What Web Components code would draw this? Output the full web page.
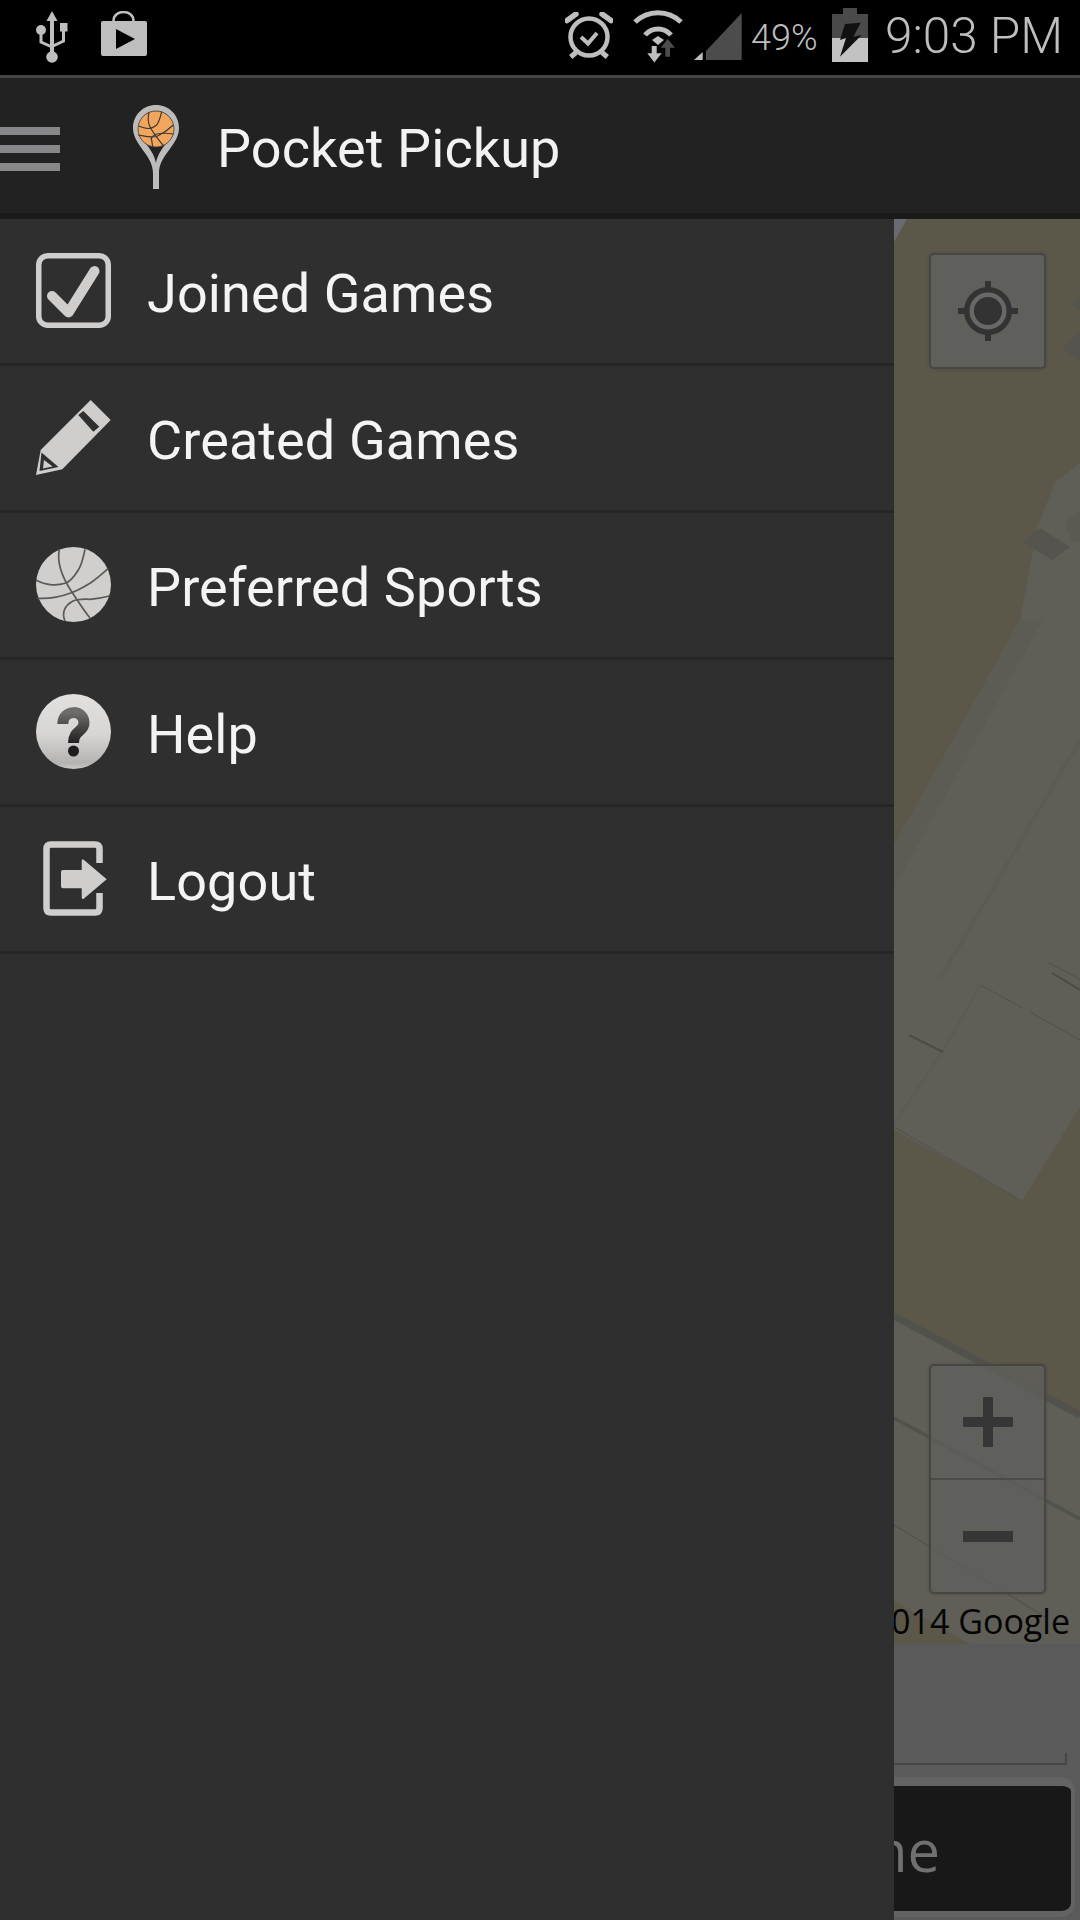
<!DOCTYPE html>
<html><head><meta charset="utf-8"><style>
html,body{margin:0;padding:0;background:#000}
body{width:1080px;height:1920px;overflow:hidden;font-family:Roboto,"Liberation Sans",sans-serif}
</style></head><body>
<app-shell>
  <status-bar slot="status"></status-bar>
  <action-bar slot="action" title-text="Pocket Pickup"></action-bar>
  <map-pane slot="map"></map-pane>
  <nav-drawer slot="drawer">
    <drawer-item icon="check">Joined Games</drawer-item>
    <drawer-item icon="pencil">Created Games</drawer-item>
    <drawer-item icon="ball">Preferred Sports</drawer-item>
    <drawer-item icon="help">Help</drawer-item>
    <drawer-item icon="logout">Logout</drawer-item>
  </nav-drawer>
</app-shell>
<script>
const def=(name,html)=>customElements.define(name,class extends HTMLElement{
  constructor(){super();this.attachShadow({mode:'open'}).innerHTML=typeof html==='function'?html(this):html;}
});
const ICONS={
check:`<svg width="76" height="76" viewBox="0 0 76 76"><rect x="2.750" y="2.750" width="69.500" height="69.500" rx="9" fill="none" stroke="#cfcecc" stroke-width="5.500"/><path d="M16 43 L32.500 59.500 L58.500 18" fill="none" stroke="#cfcecc" stroke-width="10" stroke-linecap="round" stroke-linejoin="round"/></svg>`,
pencil:`<svg width="76" height="76" viewBox="0 0 76 76"><path d="M54.700 0 L74.700 20 L26.300 69.300 L0 75 L4.700 50 Z" fill="#cfcecc"/><path d="M42.300 15 L47.300 11 L63.300 26.700 L57.300 31.700 Z" fill="#2f2f2f"/><path d="M5.500 52.500 L22.500 67 L3.500 71 Z" fill="#2f2f2f"/><path d="M8 60 L16.500 66.500 L7 68.500 Z" fill="#cfcecc"/></svg>`,
ball:`<svg width="76" height="76" viewBox="0 0 76 76"><circle cx="37.500" cy="37.500" r="37.500" fill="#d0cfcd"/><g fill="none" stroke="#5a5a5a" stroke-width="1.700"><path d="M23.300 2.300 C21 14 24 27 35.700 44.700 C42 54 48 64 54 71"/><path d="M49 2.300 C47 12 45 19 42.300 23 C38 30 34 35 29 36.300 C20 39 8 38 0 33"/><path d="M72.300 21.300 C66 27 60 32 54 36.300 C48 40 41 44 34 46.300 C24 50 12 52 1.300 51.300"/><path d="M73.300 49 C66 51 60 52 54 52.300 C46 52 40 52 35.700 54.700 C30 58 25 65 29 74"/></g></svg>`,
help:`<svg width="76" height="76" viewBox="0 0 76 76"><defs><linearGradient id="h" x1="0" y1="0" x2="0" y2="1"><stop offset="0" stop-color="#e2e1e0"/><stop offset=".55" stop-color="#d6d5d3"/><stop offset=".92" stop-color="#b4b3b1"/><stop offset="1" stop-color="#cbcac8"/></linearGradient><linearGradient id="q" x1="0" y1="0" x2="0" y2="1"><stop offset="0" stop-color="#6e6c6a"/><stop offset="1" stop-color="#222020"/></linearGradient></defs><circle cx="37.500" cy="37.500" r="37.500" fill="url(#h)"/><path d="M26.800 30 C26.800 15 48 15 48 29 C48 38 37.500 36 37.500 49" fill="none" stroke="url(#q)" stroke-width="11"/><circle cx="37.500" cy="57" r="5.500" fill="#1e1c1c"/></svg>`,
logout:`<svg width="76" height="76" viewBox="0 0 76 76"><path d="M63.500 22 V8 Q63.500 3.500 59 3.500 H15 Q10.500 3.500 10.500 8 V67 Q10.500 71.500 15 71.500 H59 Q63.500 71.500 63.500 67 V52" fill="none" stroke="#cfcecc" stroke-width="6.500"/><path d="M27 29 Q25 29 25 31 V45 Q25 47.300 27 47.300 H45.700 V56 Q45.700 59 48 57.500 L70.700 38.300 L48 19 Q45.700 17 45.700 20 V29 Z" fill="#cfcecc"/></svg>`};

def('app-shell',`<style>
:host{display:grid;grid-template-columns:894px 186px;grid-template-rows:78px 141px 1701px;width:1080px;height:1920px;background:#000}
::slotted([slot=status]){grid-column:1/3;grid-row:1}
::slotted([slot=action]){grid-column:1/3;grid-row:2}
::slotted([slot=drawer]){grid-column:1;grid-row:3}
::slotted([slot=map]){grid-column:2;grid-row:3}
</style><slot name="status"></slot><slot name="action"></slot><slot name="drawer"></slot><slot name="map"></slot>`);

def('status-bar',`<style>
:host{display:flex;align-items:flex-start;box-sizing:border-box;height:78px;background:#000;border-bottom:3px solid #444;color:#bebebe;font-family:Roboto,sans-serif}
svg{display:block;flex:none}
.pct{flex:none;width:70px;font-weight:300;font-size:36px;line-height:40px;margin:18px 0 0 9px}
.time{flex:none;font-weight:300;font-size:49.500px;line-height:58px;margin:7px 0 0 17px;white-space:nowrap}
</style>
<svg width="32" height="53" viewBox="0 0 32 53" style="margin:11px 0 0 36px"><path d="M16 0 L21.500 10 H18 V42 H14 V10 H10.500 Z" fill="#bebebe"/><circle cx="16" cy="46" r="5.800" fill="#bebebe"/><circle cx="5" cy="19" r="5" fill="#bebebe"/><rect x="24" y="12" width="7.500" height="8.500" fill="#bebebe"/><path d="M5 22 V31 L16 36 M27.500 20 V30 L16 35.500" fill="none" stroke="#bebebe" stroke-width="3"/></svg>
<svg width="46" height="45" viewBox="0 0 46 45" style="margin:11px 0 0 33px"><path d="M12.500 10 C12.500 -2 32.500 -2 32.500 10" fill="none" stroke="#bebebe" stroke-width="2.500"/><rect x="0" y="10" width="46" height="35" rx="2" fill="#bebebe"/><path d="M15 18 L34 28 L15 38 Z" fill="#000"/></svg>
<svg width="48" height="49" viewBox="0 0 48 49" style="margin:12px 0 0 418px"><circle cx="24" cy="25" r="18.500" fill="none" stroke="#bebebe" stroke-width="4.500"/><path d="M16 25 L23 31.500 L32 21" fill="none" stroke="#bebebe" stroke-width="4"/><path d="M2 8.500 L11 2 M46 8.500 L37 2" stroke="#bebebe" stroke-width="5.500" stroke-linecap="round"/><path d="M5.700 45 L11 40.500 M42.300 45 L37 40.500" stroke="#bebebe" stroke-width="5"/></svg>
<svg width="50" height="54" viewBox="0 0 50 54" style="margin:9px 0 0 20px"><g fill="none" stroke="#bebebe" stroke-width="5"><path d="M2 13 A33 33 0 0 1 48 13"/><path d="M12 26 A17 17 0 0 1 38 26"/></g><path d="M19 31 L25 27 L31 31 L25 36 Z" fill="#bebebe"/><path d="M18.700 37 H23.700 V44.300 H28.700 L21.300 53.500 L14.300 44.300 H18.700 Z" fill="#bebebe"/><path d="M34.700 30 L42 38.700 H37 V47.700 H32.300 V38.700 H27.700 Z" fill="#4c4c4c"/></svg>
<svg width="48" height="47" viewBox="0 0 48 47" style="margin:13px 0 0 11px"><path d="M0 47 L8.700 39 V47 Z" fill="#bebebe"/><path d="M12 47 V38 L47.700 0 V47 Z" fill="#4c4c4c"/></svg>
<span class="pct">49%</span>
<svg width="36" height="54" viewBox="0 0 36 54" style="margin:8px 0 0 11px"><rect x="11" y="0" width="14" height="7" fill="#4a4a4a"/><rect x="0" y="6" width="36" height="24" fill="#4a4a4a"/><rect x="0" y="30" width="36" height="24" fill="#c2c2c2"/><path d="M13 16 L28.700 14.700 L21.300 28.700 L29.700 27 L8 48.700 L14 30 L8 32 Z" fill="#111"/></svg>
<span class="time">9:03 PM</span>`);

def('action-bar',h=>`<style>
:host{display:flex;align-items:center;box-sizing:border-box;height:141px;background:#222;border-bottom:6px solid #1a1a1a;color:#f2f2f2}
svg{display:block;flex:none}
.t{font:400 54px/1 Roboto,sans-serif;margin-left:38px;padding-top:7px;letter-spacing:.1px;white-space:nowrap}
</style>
<svg width="60" height="44" viewBox="0 0 60 44" style="margin-top:7px"><g fill="#88888b"><rect width="60" height="8"/><rect y="18" width="60" height="8"/><rect y="36" width="60" height="8"/></g></svg>
<svg width="46" height="84" viewBox="0 0 46 84" style="margin:3px 0 0 73px"><path d="M23 0 C36 0 46 10 46 23 C46 40 26 50 26 68 V84 H20 V68 C20 50 0 40 0 23 C0 10 10 0 23 0 Z" fill="#bdbcba"/><path d="M23 6 C12 6 6 14 6 23 C6 35 20 42 23 58 C26 42 40 35 40 23 C40 14 34 6 23 6 Z" fill="#222"/><circle cx="23" cy="24" r="18" fill="#f2a55c" stroke="#3c3c3c" stroke-width=".8"/><g fill="none" stroke="#3e3a36" stroke-width="1.200"><path d="M16 7 C14.500 14 15 18 17 21.700 C20 28 25 34 30.300 40.500"/><path d="M28.700 6.700 C27.500 12 26 17 23.700 20 C20 23 17 24 13.700 23.300 C11 23 8 22 5.500 21"/><path d="M40.300 20 C34 26 29 29 23.700 31.500 C17 33 11 31 5.300 30"/><path d="M40.800 29 C34 28 28 28 23.700 29 C20 30.500 17 33 18.700 35 C19 38 19.500 40 19.700 41.700"/></g></svg>
<span class="t">${h.getAttribute('title-text')}</span>`);

def('nav-drawer',`<style>
:host{display:flex;flex-direction:column;background:#2f2f2f;min-height:0;position:relative;z-index:1}
</style><slot></slot>`);

def('drawer-item',h=>`<style>
:host{display:flex;align-items:center;box-sizing:border-box;height:147px;flex:none;border-bottom:3px solid #262626;color:#f4f4f4;font:400 54px/1 Roboto,sans-serif;letter-spacing:.1px;padding-left:36px;white-space:nowrap}
.i{flex:none;width:76px;height:76px;margin-right:35px}
.l{padding-top:6px}
svg{display:block}
</style><span class="i">${ICONS[h.getAttribute('icon')]}</span><span class="l"><slot></slot></span>`);

def('map-pane',`<style>
:host{display:block;position:relative;overflow:hidden;background:#5a5a5a;height:100%}
.canvas{position:absolute;left:0;top:0;display:block}
.ctl{position:absolute;left:35px;width:117px;box-sizing:border-box;border:2px solid #474641;border-radius:5px;box-shadow:0 0 3px #4c4b44}
.loc{top:34px;height:116px;background:#5f5f5c;display:flex;align-items:center;justify-content:center}
.zoom{top:1145px;height:230px;background:rgba(96,96,94,.72);display:flex;flex-direction:column}
.zoom div{flex:1;display:flex;align-items:center;justify-content:center}
.zoom div+div{border-top:2px solid #4c4b47}
.copy{position:absolute;right:10px;top:1382px;width:176px;display:flex;justify-content:flex-end;font:400 34px/40px "Open Sans",sans-serif;color:#040404;white-space:nowrap}
.field{position:absolute;left:0;width:173px;top:1534px;height:12px;box-sizing:border-box;border-right:2px solid #464646;border-bottom:2px solid #464646}
.btn{position:absolute;left:-20px;width:201px;top:1558px;height:140px;box-sizing:border-box;background:#181818;border:solid #636363;border-width:9px 4px 6px;border-radius:14px}
.btn span{position:absolute;left:-6px;top:35px;font:400 58px/1 "Open Sans",sans-serif;color:#707070}
</style>
<svg class="canvas" width="186" height="1425" viewBox="894 219 186 1425">
<rect x="894" y="219" width="186" height="1425" fill="#5b5749"/>
<path d="M894 219 H907 L894 242 Z" fill="#6a6b72"/>
<path d="M894 845 L1020 620 L1037 528 L1055 482 L1080 463 V1107 L1022 1201 L894 1130 Z" fill="#5f5e57"/>
<path d="M894 845 L1020 620 L1043 620 L894 888 Z" fill="#5d5c54"/>
<path d="M940 979 L1080 740" stroke="#5d5b54" stroke-width="4" fill="none"/>
<path d="M894 1124 L943 1051 L980 986" stroke="#5d5b54" stroke-width="2.500" fill="none"/>
<path d="M1022 542 L1040 528 L1070 547 L1052 560 Z" fill="#55544e"/>
<path d="M1062 350 L1080 332 V360 Z" fill="#55544e"/>
<path d="M1072 305 L1080 297 V310 Z" fill="#55544e"/>
<path d="M1065 523 L1080 510 V540 L1072 541 Z" fill="#5a5952"/>
<g fill="none" stroke="#52514b" stroke-width="1">
<path d="M894 1127 L1022 1201"/>
<path d="M980 985 L1023 1008 M1030 1012 L1080 1040 M1047 962 L1080 979"/>
<path d="M894 1314 L903 1320"/>
</g>
<path d="M1052 973 L1080 990 M909 1035 L943 1052" stroke="#4c4b46" stroke-width="2" fill="none"/>
<path d="M894 1316 L1080 1415 V1644 H894 Z" fill="#5f5e57"/>
<path d="M894 1601 L970 1644 H894 Z" fill="#5b5749"/>
<path d="M894 1316 L1080 1415" stroke="#52524d" stroke-width="7" fill="none"/>
<path d="M894 1418 L1080 1519" stroke="#52524d" stroke-width="3.500" fill="none"/>
<path d="M894 1525 L1047 1618" stroke="#4e4d48" stroke-width="1" fill="none"/>
</svg>
<div class="ctl loc"><svg width="60" height="60" viewBox="0 0 60 60"><g fill="#333"><rect x="27" y="0" width="6" height="60"/><rect x="0" y="27" width="60" height="6"/><circle cx="30" cy="30" r="24"/></g><circle cx="30" cy="30" r="16.300" fill="none" stroke="#686866" stroke-width="4.500"/></svg></div>
<div class="ctl zoom"><div><svg width="50" height="50" viewBox="0 0 50 50"><path d="M20 0 H30 V20 H50 V30 H30 V50 H20 V30 H0 V20 H20 Z" fill="#363636"/></svg></div><div><svg width="50" height="11" viewBox="0 0 50 11"><rect width="50" height="11" fill="#363636"/></svg></div></div>
<div class="copy">014 Google</div>
<div class="field"></div>
<div class="btn"><span>ne</span></div>`);
</script>
</body></html>
